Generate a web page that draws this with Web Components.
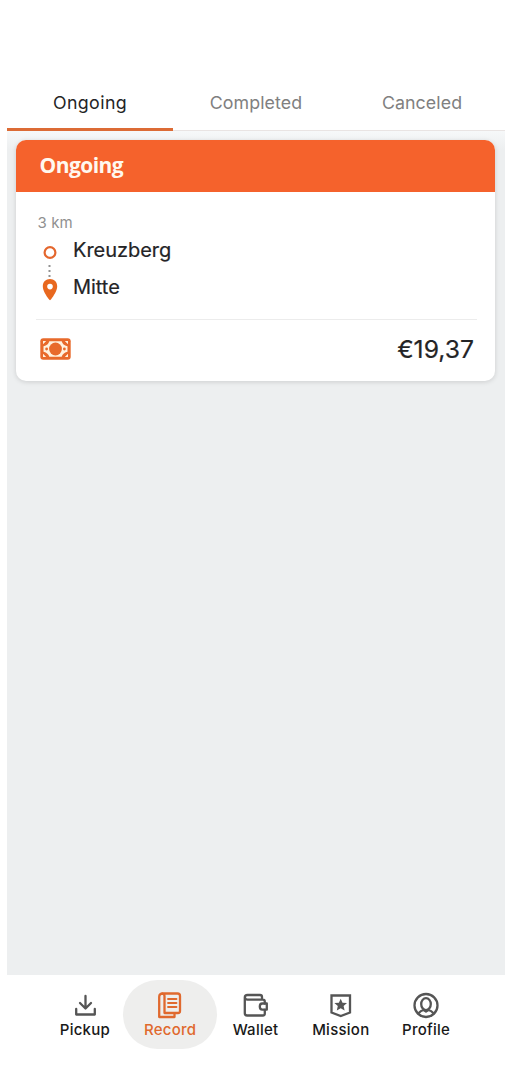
<!DOCTYPE html>
<html lang="en">
<head>
<meta charset="utf-8">
<title>Ride records</title>
<style>
html,body{margin:0;height:100%;background:#fff;overflow:hidden}
body{font-family:Inter,"Liberation Sans",sans-serif}
</style>
</head>
<body>
<ride-app></ride-app>
<script>
const define = (name, html) => customElements.define(name, class extends HTMLElement {
  constructor() {
    super();
    const t = document.createElement('template');
    t.innerHTML = html;
    this.attachShadow({mode: 'open'}).appendChild(t.content.cloneNode(true));
  }
});

define('tab-item', `<style>
:host{flex:1;display:flex;justify-content:center;align-items:center;box-sizing:border-box;height:57px;padding-top:1px;border-bottom:1px solid #e9e4e3;font-size:17.800px;line-height:24px;letter-spacing:.08px;color:#808080}
:host([active]){color:#242426;border-bottom:3px solid #dc6b35;padding-top:3px;letter-spacing:.4px}
</style><slot></slot>`);

define('tab-bar', `<style>
:host{display:flex;align-items:flex-end;height:131px;box-sizing:border-box;background:#fff}
</style><slot></slot>`);

define('route-stops', `<style>
:host{display:grid;grid-template-columns:26px 1fr;column-gap:10px;height:74px;color:#242426;font-size:20px}
svg{display:block}
.names{display:grid;grid-template-rows:37px 37px;line-height:37px;letter-spacing:-.03px;-webkit-text-stroke:.2px #242426}
</style>
<svg width="26" height="74" viewBox="37 232 26 74">
<circle cx="50" cy="252.500" r="5.400" fill="none" stroke="#e4672e" stroke-width="2.200"/>
<g fill="#929292"><rect x="48.500" y="265" width="2" height="2"/><rect x="48.500" y="270" width="2" height="2"/><rect x="48.500" y="275" width="2" height="2"/></g>
<path fill="#e8681f" fill-rule="evenodd" d="M50 279c-4.200 0-7.200 3-7.200 7.200 0 4.600 3.700 9.700 5.900 12.900q1.300 2.100 2.600 0c2.200-3.200 5.900-8.300 5.900-12.900 0-4.200-3-7.200-7.200-7.200zm0 4.800a2.800 2.800 0 1 1 0 5.600 2.800 2.800 0 0 1 0-5.600z"/>
</svg>
<div class="names"><slot name="from"></slot><slot name="to"></slot></div>`);

define('cash-icon', `<style>:host{display:block;height:22px}svg{display:block}</style>
<svg width="31" height="22" viewBox="0 0 31 22">
<rect x=".3" y=".3" width="30.400" height="21.400" rx="3" fill="#e86a2b"/>
<path fill="#fff2df" d="M9.300 3.200h12.400c.7 2.600 2.400 4.300 5.800 5.100v5.400c-3.400.8-5.100 2.500-5.800 5.100H9.300c-.7-2.600-2.400-4.300-5.800-5.100V8.300c3.400-.8 5.100-2.500 5.800-5.100z"/>
<g fill="#e86a2b"><circle cx="15.500" cy="11" r="6.400"/><circle cx="6.600" cy="11" r="1.400"/><circle cx="24.400" cy="11" r="1.400"/></g>
<path fill="#fff2df" d="M3 3h3.200L3 6.200zM28 3h-3.200L28 6.200zM3 19h3.200L3 15.800zM28 19h-3.200l3.200-3.200z"/>
</svg>`);

define('ride-card', `<style>
:host{display:block;box-sizing:border-box;height:241px;border-radius:10px;background:#fff;overflow:hidden;box-shadow:0 1px 5px #00000024}
header{height:51.500px;padding-left:23.500px;background:#f5622c;color:#fff8ef;font:700 21px/50px "Open Sans","Noto Sans",sans-serif;letter-spacing:-.55px}
.body{padding:20px 19px 0 21px}
.distance{height:20px;line-height:21px;font-size:15px;letter-spacing:.1px;color:#909090;padding-left:.5px}
.fare{display:flex;align-items:center;justify-content:space-between;height:58px;margin:13px -1px 0;border-top:1px solid #ececec;padding:0 3px 0 3.500px;font-size:24.700px;color:#242426;-webkit-text-stroke:.2px #242426}
</style>
<header><slot name="status"></slot></header>
<div class="body"><div class="distance"><slot name="distance"></slot></div><slot></slot>
<div class="fare"><cash-icon></cash-icon><slot name="price"></slot></div></div>`);

define('nav-item', `<style>
:host{display:flex;flex-direction:column;align-items:center;box-sizing:border-box;width:85.300px;height:69px;padding-top:11px;color:#555;font-size:15px;line-height:20px;letter-spacing:.25px;font-weight:500}
:host([active]){width:94px;margin:0 -4.350px;background:#eeeeed;border-radius:35px;color:#e0692e}
.icon{display:block;height:29px}
.label{display:block;color:#191919}
:host([active]) .label{color:#e0692e}
</style>
<span class="icon"><slot name="icon"></slot></span><span class="label"><slot></slot></span>`);

define('bottom-nav', `<style>
:host{display:flex;justify-content:center;box-sizing:border-box;height:104px;padding:5px 1px 0 0;background:#fff}
</style><slot></slot>`);

define('ride-app', `<style>
:host{display:flex;flex-direction:column;width:498px;height:1079px;margin-left:7px}
main{flex:1;box-sizing:border-box;background:linear-gradient(#f6f8f9,#edeff0 18px);padding:9px 10px 0 9px}
nav-item svg{display:block;width:28px;height:28px;fill:none;stroke:currentColor;stroke-width:2.300;stroke-linejoin:round;stroke-linecap:round}
</style>
<tab-bar><tab-item active>Ongoing</tab-item><tab-item>Completed</tab-item><tab-item>Canceled</tab-item></tab-bar>
<main><ride-card><span slot="status">Ongoing</span><span slot="distance">3 km</span>
<route-stops><span slot="from">Kreuzberg</span><span slot="to">Mitte</span></route-stops><span slot="price">€19,37</span></ride-card></main>
<bottom-nav>
<nav-item>Pickup<svg slot="icon" viewBox="0 0 28 28"><path d="M14.500 5v12M9 12l5.500 5.500L20 12M5.200 18v5.500h18.600V18"/></svg></nav-item>
<nav-item active>Record<svg slot="icon" viewBox="1 0 28 28"><path d="M8 2.500h14.500q2.500 0 2.500 2.500v15q0 2-2 2H9.500M8 2.500Q4.200 2.500 4.200 6v20h15.300v-4M9.500 22V5q0-2.500-2.500-2.500"/><path d="M13 8h8.500M13 12h8.500M13 16h8.500" stroke-width="1.800"/></svg></nav-item>
<nav-item>Wallet<svg slot="icon" viewBox="0.500 -0.500 28 28"><path d="M20.500 8.200V5.500q0-2-2-2H6q-2.700 0-2.700 2.400v15.800q0 2.300 2.300 2.300h15.700q2 0 2-2v-3.500M3.500 6q.2 2.200 2.500 2.200h15.300q2 0 2 2V12"/><path d="M20.800 12h4.500v6.200h-4.500q-2.500 0-2.500-3.100t2.500-3.100z"/></svg></nav-item>
<nav-item>Mission<svg slot="icon" viewBox="0.500 -0.500 28 28"><path d="M5 4h18.500v17L14.250 24.500 5 21z" stroke-linejoin="miter"/><path fill="currentColor" stroke="none" d="m14.200 7.200 1.800 4 4.500.4-3.400 3 1 4.400-3.900-2.300-3.900 2.300 1-4.400-3.400-3 4.500-.4z"/></svg></nav-item>
<nav-item>Profile<svg slot="icon" viewBox="0.500 -0.500 28 28"><circle cx="14.500" cy="14" r="11.500"/><ellipse cx="14.500" cy="12.600" rx="4.800" ry="6"/><path d="M7 21.800q2.300-2.700 5-3.300l2.500 1.500 2.500-1.500q2.700.6 5 3.300"/></svg></nav-item>
</bottom-nav>`);
</script>
</body>
</html>
